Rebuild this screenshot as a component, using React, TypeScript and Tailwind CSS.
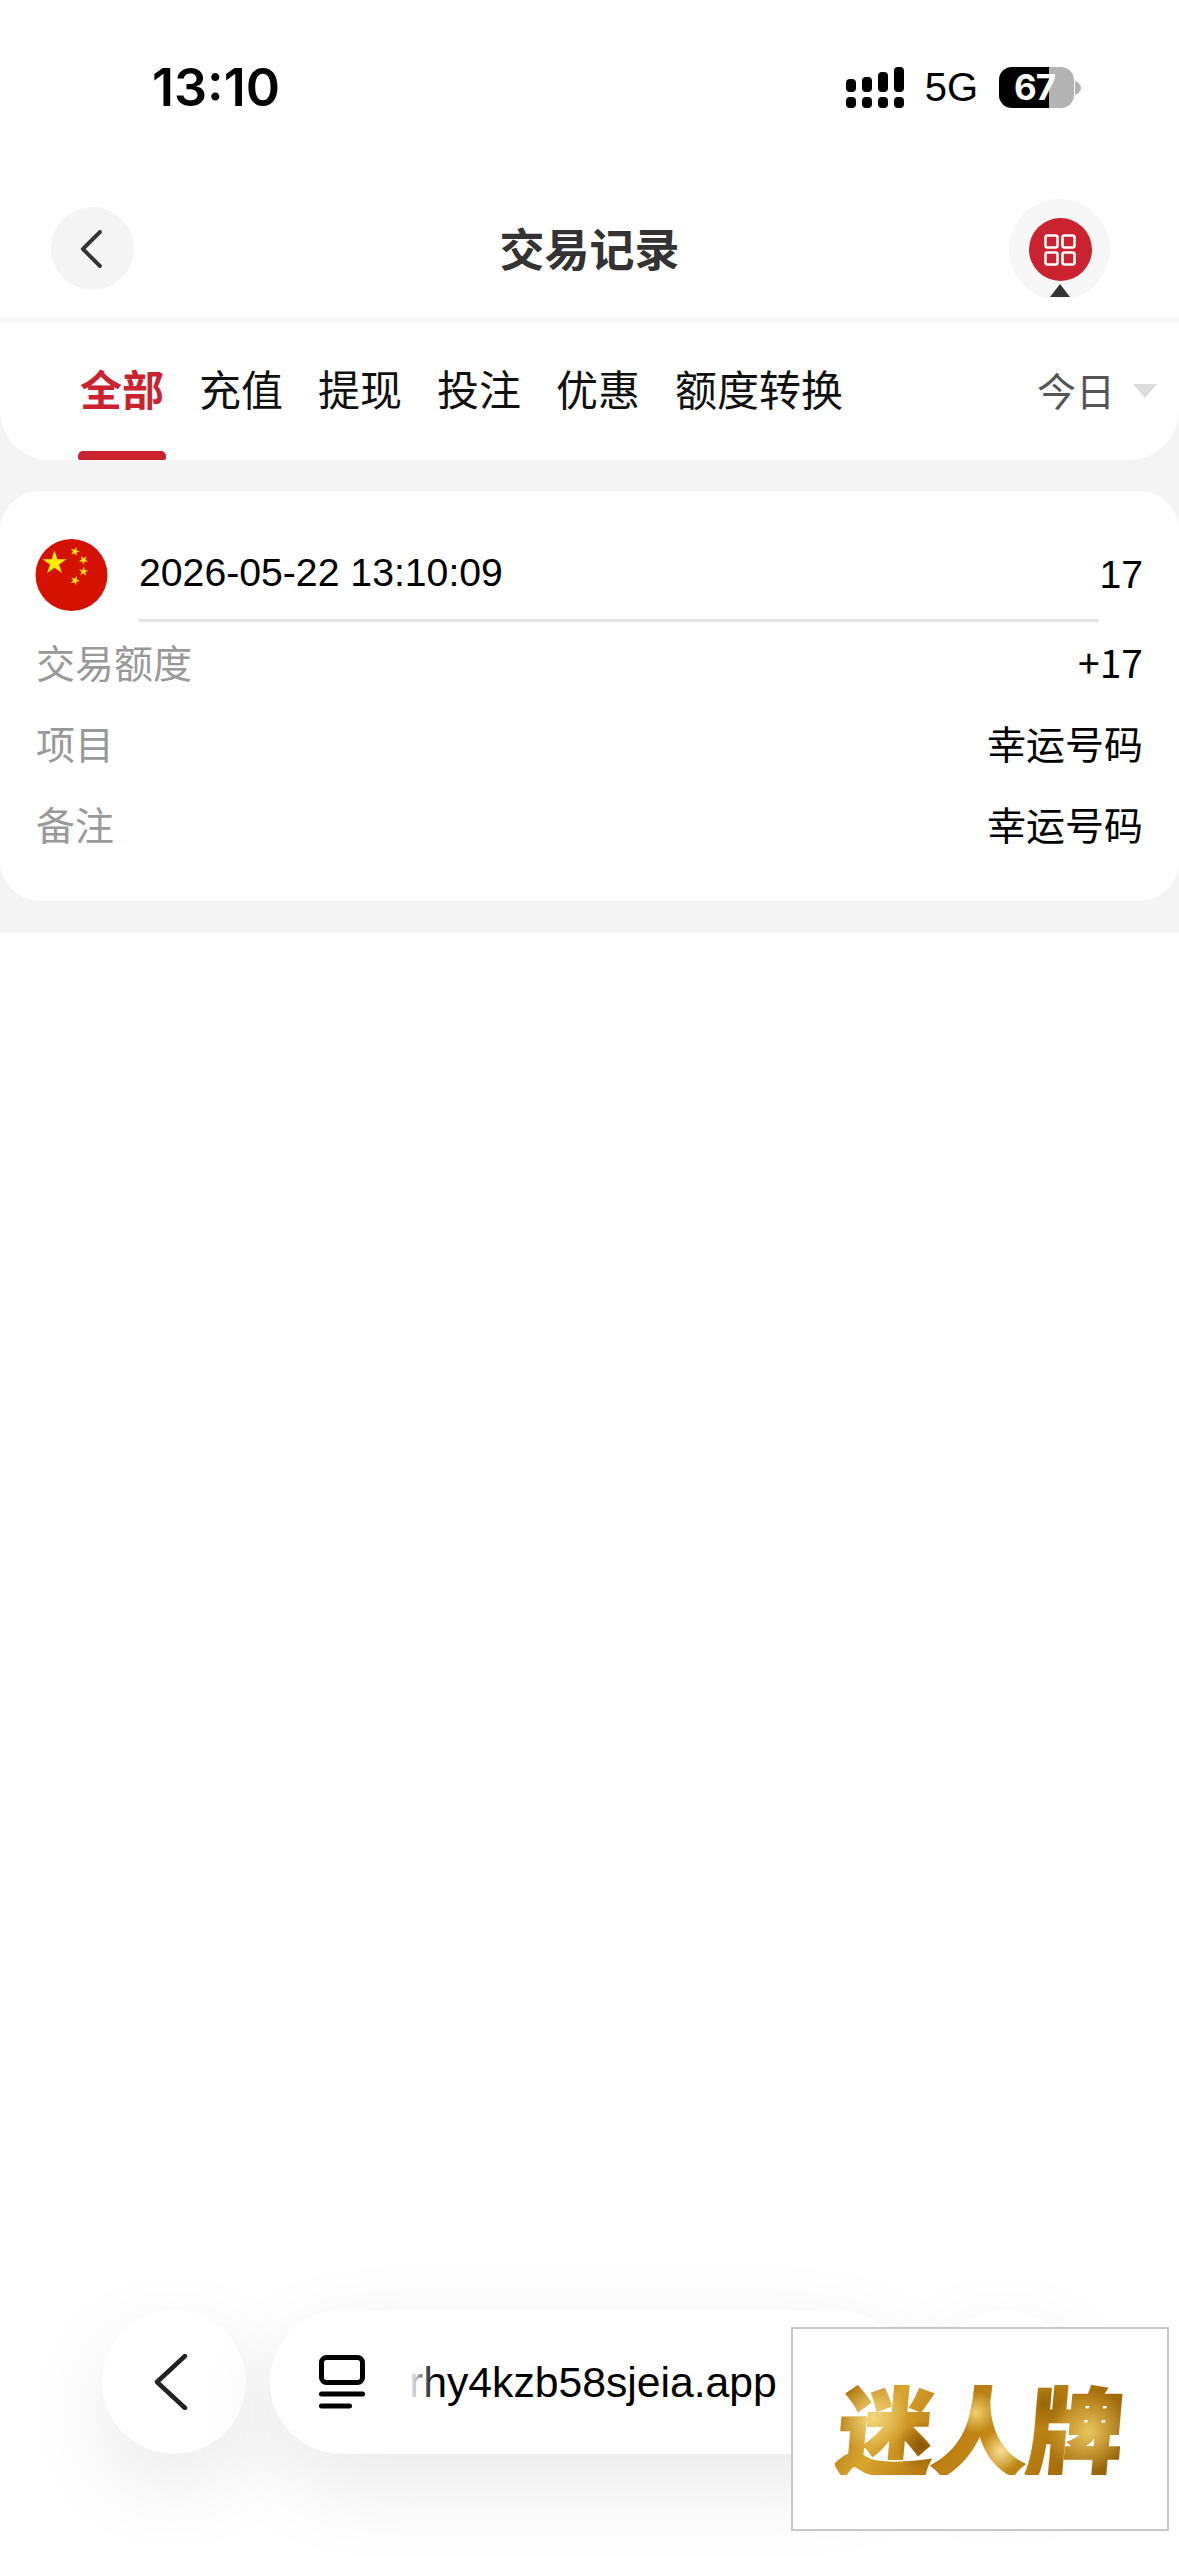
import React from "react";

const cjk = "font-['Noto_Sans_CJK_SC','Liberation_Sans',sans-serif]";

const tabs = ["全部", "充值", "提现", "投注", "优惠", "额度转换"];

const rows = [
  { label: "交易额度", value: "+17" },
  { label: "项目", value: "幸运号码" },
  { label: "备注", value: "幸运号码" },
];

const starPoints = (cx: number, cy: number, r: number, rot = 0) => {
  const pts: string[] = [];
  for (let i = 0; i < 10; i++) {
    const rad = i % 2 === 0 ? r : r * 0.382;
    const a = (Math.PI / 5) * i - Math.PI / 2 + rot;
    pts.push(`${(cx + rad * Math.cos(a)).toFixed(2)},${(cy + rad * Math.sin(a)).toFixed(2)}`);
  }
  return pts.join(" ");
};

const SignalIcon = () => (
  <svg width="58" height="41" viewBox="0 0 58 41" fill="#000">
    <rect x="0" y="12" width="10" height="13" rx="4" />
    <rect x="16" y="10" width="10" height="15" rx="4" />
    <rect x="32" y="5" width="10" height="20" rx="4" />
    <rect x="48" y="0" width="10" height="25" rx="4" />
    <rect x="0" y="30" width="10" height="11" rx="4" />
    <rect x="16" y="30" width="10" height="11" rx="4" />
    <rect x="32" y="30" width="10" height="11" rx="4" />
    <rect x="48" y="30" width="10" height="11" rx="4" />
  </svg>
);

const Battery = () => (
  <div className="flex items-center">
    <div className="relative flex h-[41px] w-[75px] rounded-[13px] bg-[#b3b3b3]">
      <div className="h-full w-[50px] rounded-l-[13px] bg-black" />
      <span className="absolute left-[15px] top-0 font-['Inter',sans-serif] text-[35px] font-bold leading-[41px] tracking-[-1px] text-white">
        67
      </span>
    </div>
    <svg width="7" height="14" viewBox="0 0 7 14" fill="#b3b3b3">
      <path d="M1 0c3 1 6 4 6 7s-3 6-6 7z" />
    </svg>
  </div>
);

const Flag = () => (
  <svg width="73" height="72" viewBox="0 0 73 72" className="shrink-0">
    <circle cx="36.5" cy="36" r="36" fill="#d51200" />
    <polygon points={starPoints(19.5, 24, 12.5)} fill="#ffee00" />
    <polygon points={starPoints(40, 12.5, 4.8, 0.3)} fill="#ffee00" />
    <polygon points={starPoints(48.5, 21, 4.8, 0.7)} fill="#ffee00" />
    <polygon points={starPoints(48.5, 32.5, 4.8, 0.1)} fill="#ffee00" />
    <polygon points={starPoints(40, 41.5, 4.8, 0.4)} fill="#ffee00" />
  </svg>
);

const App = () => {
  return (
    <div className={`relative flex h-[2556px] w-[1179px] flex-col overflow-hidden bg-white ${cjk}`}>
      {/* status bar */}
      <div className="flex h-[199px] shrink-0 items-start justify-between pl-[152px] pr-[98px] pt-[67px]">
        <span className="font-['Inter',sans-serif] text-[52px] font-semibold leading-[41px] text-black">
          13:10
        </span>
        <div className="flex items-center">
          <SignalIcon />
          <span className="ml-[21px] mr-[21px] font-['Liberation_Sans',sans-serif] text-[40px] leading-[41px] text-black">
            5G
          </span>
          <Battery />
        </div>
      </div>

      {/* header */}
      <div className="flex h-[119px] shrink-0 items-start justify-between">
        <div className="w-[170px] pl-[51px] pt-[8px]">
          <div className="flex h-[83px] w-[83px] items-center justify-center rounded-full bg-[#f4f4f4]">
            <svg width="24" height="38" viewBox="0 0 24 38" fill="none" stroke="#333" strokeWidth="4" strokeLinecap="round" strokeLinejoin="round" className="mr-[3px]">
              <path d="M21 2 3 19l18 17" transform="matrix(.95 0 0 1 1 0)" />
            </svg>
          </div>
        </div>
        <div className="pt-[23px] text-[45px] font-bold leading-[52px] text-[#333]">交易记录</div>
        <div className="h-[99px] w-[170px] overflow-hidden">
          <div className="flex h-[101px] w-[101px] items-center justify-center rounded-full bg-[#f7f7f7] pl-[2px]">
            <div className="relative flex h-[63px] w-[63px] items-center justify-center rounded-full bg-[#cb2230]">
              <svg width="32" height="32" viewBox="0 0 32 32" fill="none" stroke="#fff" strokeWidth="2.6">
                <rect x="1.5" y="1.5" width="12" height="12" rx="2" />
                <rect x="18.5" y="1.5" width="12" height="12" rx="2" />
                <rect x="1.5" y="18.5" width="12" height="12" rx="2" />
                <rect x="18.5" y="18.5" width="12" height="12" rx="2" />
              </svg>
              <svg width="20" height="13" viewBox="0 0 20 13" fill="#333" className="absolute left-[21.5px] top-[66px]">
                <polygon points="10,0 20,13 0,13" />
              </svg>
            </div>
          </div>
        </div>
      </div>

      {/* grey page area */}
      <div className="shrink-0 bg-[#f4f4f4] pt-[4px]">
        <div className="flex h-[138px] items-stretch justify-between rounded-b-[50px] bg-white">
          <div className="ml-[38px] flex items-center gap-[35px] bg-white pl-[42px] pr-[40px]">
            {tabs.map((tab, index) => (
              <div key={tab} className="relative flex h-full items-center">
                <span className={index === 0 ? "pb-[8px] text-[42px] font-bold text-[#cb2230]" : "pb-[8px] text-[42px] text-[#111]"}>{tab}</span>
                {index === 0 && (
                  <div className="absolute bottom-0 left-[-2px] h-[9px] w-[88px] rounded-t-[5px] rounded-b-[2px] bg-[#cb2230]" />
                )}
              </div>
            ))}
          </div>
          <div className="flex items-center gap-[18px] pr-[22px]">
            <span className="pb-[4px] text-[39px] text-[#555]">今日</span>
            <svg width="24" height="14" viewBox="0 0 24 14" fill="#dcdcdc">
              <polygon points="0,0 24,0 12,14" />
            </svg>
          </div>
        </div>

        {/* record card */}
        <div className="pb-[32px] pt-[31px]">
          <div className="h-[410px] rounded-[40px] bg-white pt-[48px]">
            <div className="flex items-start pr-[36px]">
              <div className="ml-[35px] mr-[31px]">
                <Flag />
              </div>
              <div className="flex h-[83px] flex-1 items-center border-b-[3px] border-[#e4e4e4] pb-[11px] font-['Liberation_Sans',sans-serif] text-[39.2px] text-black">
                2026-05-22 13:10:09
              </div>
              <div className="flex h-[83px] w-[44px] items-center justify-end pb-[11px] font-['Liberation_Sans',sans-serif] text-[39.2px] text-black">
                17
              </div>
            </div>
            {rows.map((row) => (
              <div key={row.label} className="flex h-[81px] items-center justify-between px-[36px] pb-[3px] text-[39px]">
                <span className="text-[#999]">{row.label}</span>
                <span className="text-black">{row.value}</span>
              </div>
            ))}
          </div>
        </div>
      </div>

      <div className="flex-1" />

      {/* browser bar */}
      <div className="mb-[102px] flex h-[144px] shrink-0 gap-[24px] px-[102px]">
        <div className="flex h-[144px] w-[144px] items-center justify-center rounded-full bg-white shadow-[0_30px_90px_rgba(0,0,0,0.09)]">
          <svg width="34" height="56" viewBox="0 0 34 56" fill="none" stroke="#222" strokeWidth="4.5" strokeLinecap="round" strokeLinejoin="round" className="mr-[6px]">
            <path d="M31 2 3 28l28 26" />
          </svg>
        </div>
        <div className="flex h-[144px] w-[639px] items-center rounded-full bg-white pl-[49px] shadow-[0_30px_90px_rgba(0,0,0,0.09)]">
          <svg width="46" height="54" viewBox="0 0 46 54" fill="none" stroke="#000" strokeWidth="5" strokeLinecap="round" className="shrink-0">
            <rect x="2.5" y="2.5" width="41" height="25" rx="5" />
            <path d="M2.5 39h41M2.5 51h28" />
          </svg>
          <div className="relative ml-[44px] font-['Liberation_Sans',sans-serif] text-[42.7px] leading-none text-black">
            rhy4kzb58sjeia.app
            <div className="absolute inset-y-0 left-0 w-[26px] bg-gradient-to-r from-white to-transparent" />
          </div>
        </div>
        <div className="h-[144px] w-[144px] rounded-full bg-white shadow-[0_30px_90px_rgba(0,0,0,0.09)]" />
      </div>

      {/* floating promo box */}
      <div className="absolute bottom-[25px] left-[791px] flex h-[204px] w-[378px] items-center justify-center border-2 border-[#c8c8c8] bg-white pb-[4px]">
        <span className="inline-block skew-x-[-5deg] bg-[radial-gradient(circle_at_12%_40%,#f3d77c_0,transparent_14%),radial-gradient(circle_at_30%_70%,#8a5606_0,transparent_12%),radial-gradient(circle_at_48%_35%,#f0cf6e_0,transparent_13%),radial-gradient(circle_at_58%_75%,#f5df96_0,transparent_12%),radial-gradient(circle_at_72%_25%,#9a6508_0,transparent_12%),radial-gradient(circle_at_88%_55%,#ecc75f_0,transparent_16%),linear-gradient(115deg,#a86c08_0%,#d9a52f_20%,#b97a10_40%,#c98f18_60%,#a86f0a_80%,#94600a_100%)] bg-clip-text text-[96px] font-black leading-none tracking-[-1px] text-transparent [-webkit-text-stroke:2px_transparent]">
          迷人牌
        </span>
      </div>
    </div>
  );
};

export default App;
